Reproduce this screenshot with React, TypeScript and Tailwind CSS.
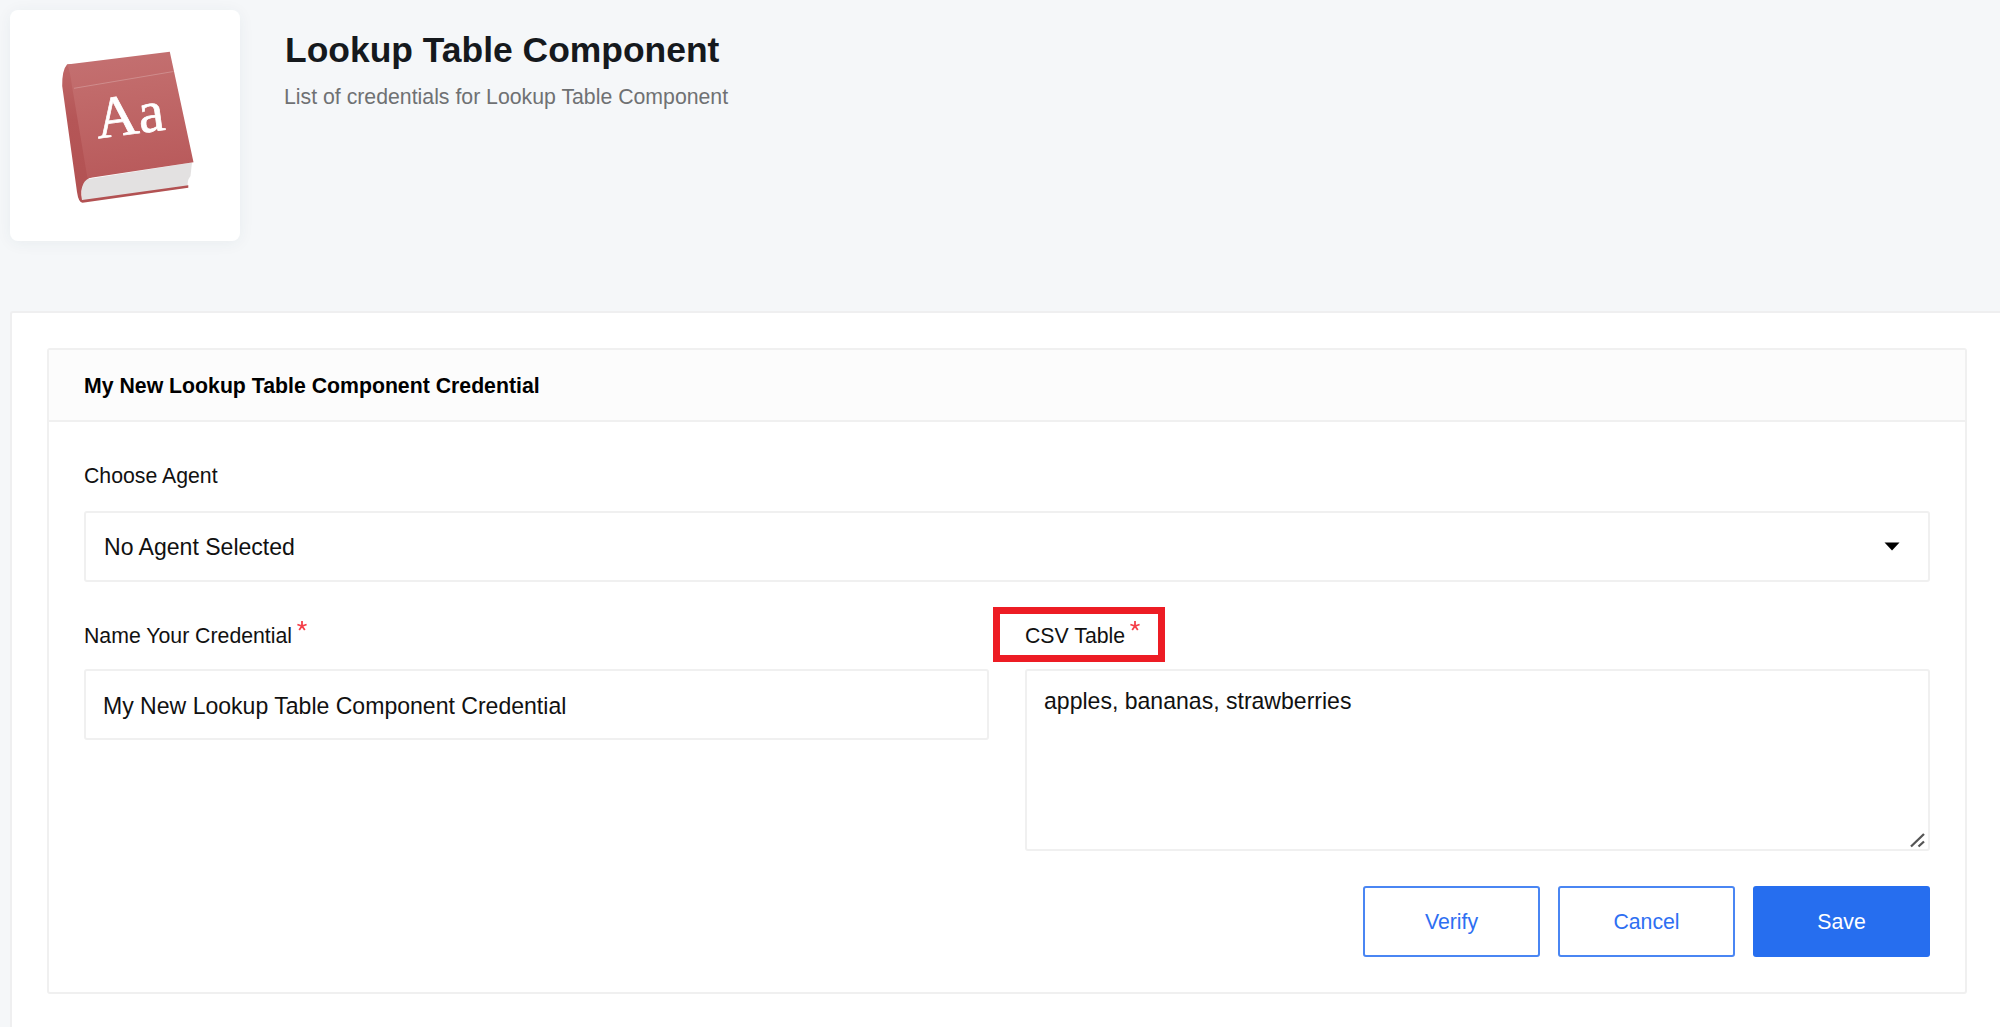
import type { ReactNode } from "react";

function BookLogo() {
  return (
    <svg viewBox="50 40 160 170" className="h-[170px] w-[160px]" aria-hidden="true">
      <defs>
        <linearGradient id="cover" x1="0" y1="0" x2="0.15" y2="1">
          <stop offset="0" stopColor="#c47172" />
          <stop offset="0.35" stopColor="#c16a6a" />
          <stop offset="1" stopColor="#b95b5c" />
        </linearGradient>
        <linearGradient id="spine" x1="0" y1="0" x2="0" y2="1">
          <stop offset="0" stopColor="#bf6767" />
          <stop offset="0.4" stopColor="#b55657" />
          <stop offset="1" stopColor="#b25152" />
        </linearGradient>
      </defs>
      <path d="M82 180 L192 162.500 L190.500 176 Q186.500 181 188 187.500 L82 201.500 Z" fill="#e3e1e1" />
      <path
        d="M67 64.500 Q62 70 62.200 86 L77 192 Q78.500 202.500 82.500 202.700 L188.300 187.800 L188.300 185.300 L82 200 Q80 190 83.500 183.500 Q85.500 179 92 177 L80 100 L72 64 Z"
        fill="url(#spine)"
      />
      <path d="M67 64.500 L169.800 51.800 L193.500 162.300 L87.500 178.300 L72 86 Q70 70 67 64.500 Z" fill="url(#cover)" />
      <path d="M74 88.300 L173.500 71.500" stroke="#cf8c8c" strokeWidth="1" fill="none" />
      <text
        x="98"
        y="138.500"
        transform="rotate(-7.500 98 138.500)"
        fontFamily="'Liberation Serif', serif"
        fontSize="59"
        fill="#fff"
        stroke="#fff"
        strokeWidth="0.700"
      >
        Aa
      </text>
    </svg>
  );
}

function Label({ children, required }: { children: ReactNode; required?: boolean }) {
  return (
    <div className="flex h-[30px] items-center pt-[2px] text-[21.27px] leading-[28px] text-[#111]">
      <span>{children}</span>
      {required && (
        <svg viewBox="0 0 10 10" className="mb-[20px] ml-[5px] h-[10px] w-[10px]" aria-label="required">
          <path d="M5 0V5M0.400 3.500L5 5L9.600 3.500M2.200 9L5 5L7.800 9" stroke="#f5404a" strokeWidth="1.800" fill="none" />
        </svg>
      )}
    </div>
  );
}

const box = "rounded-[3px] border-2 border-[#f0f0f0] bg-white text-[23.05px] text-[#111]";
const outline =
  "h-[71px] w-[177px] rounded-[3px] border-2 border-[#4a86f3] bg-white pt-[2px] text-[21.27px] text-[#2e6ff2]";

export default function App() {
  return (
    <div className="flex h-[1027px] w-[2000px] flex-col overflow-hidden bg-[#f5f7f9] font-['Liberation_Sans',Arial,sans-serif]">
      <header className="flex h-[311px] shrink-0 gap-[45px] pl-[10px] pt-[10px]">
        <div className="flex h-[231px] w-[230px] shrink-0 rounded-lg bg-white pl-[40px] pt-[30px] shadow-[0_2px_16px_rgba(40,60,80,0.06)]">
          <BookLogo />
        </div>
        <div className="pt-[18px]">
          <h1 className="h-[44px] text-[35.45px] leading-[44px] font-bold text-[#15191d]">
            Lookup Table Component
          </h1>
          <p className="mt-[9px] -ml-px text-[21.27px] leading-[32px] text-[#6f7173]">
            List of credentials for Lookup Table Component
          </p>
        </div>
      </header>

      <main className="ml-[10px] flex-1 rounded-tl-[3px] border-t-2 border-l-2 border-[#efeff0] bg-white pt-[35px] pl-[35px]">
        <section className="flex h-[646px] w-[1920px] flex-col rounded-[3px] border-2 border-[#f0f0f0] bg-white">
          <div className="flex h-[72px] shrink-0 items-center border-b-2 border-[#f0f0f0] bg-[#fcfcfc] pt-[4px] pl-[35px] text-[21.27px] font-bold text-black">
            My New Lookup Table Component Credential
          </div>
          <div className="flex flex-col px-[35px] pt-[38px]">
            <Label>Choose Agent</Label>
            <div className={`mt-[21px] flex h-[71px] items-center justify-between pr-[28px] pl-[18px] ${box}`}>
              <span className="pt-[2px]">No Agent Selected</span>
              <svg viewBox="0 0 16 9" className="h-[9px] w-[16px]" aria-hidden="true">
                <path d="M0.500 0.500H15.500L8 8.500Z" fill="#000" />
              </svg>
            </div>
            <div className="mt-[38px] grid grid-cols-2 gap-[36px]">
              <div>
                <Label required>Name Your Credential</Label>
                <div className={`mt-[19px] flex h-[71px] items-center pt-[4px] pl-[17px] ${box}`}>
                  My New Lookup Table Component Credential
                </div>
              </div>
              <div>
                <div className="relative">
                  <Label required>CSV Table</Label>
                  <div className="absolute -top-[13px] -left-[32px] h-[55px] w-[172px] border-[7px] border-[#ed1c24]" />
                </div>
                <div className={`relative mt-[19px] h-[182px] pt-[12px] pl-[17px] leading-[36px] ${box}`}>
                  apples, bananas, strawberries
                  <svg viewBox="0 0 16 16" className="absolute right-[3px] bottom-px h-4 w-4" aria-hidden="true">
                    <path d="M2 14.500L15 2M9.500 14.500L15 9.500" stroke="#555" strokeWidth="2.300" fill="none" />
                  </svg>
                </div>
              </div>
            </div>
            <div className="mt-[35px] flex justify-end gap-[18px]">
              <button className={outline}>Verify</button>
              <button className={outline}>Cancel</button>
              <button className="h-[71px] w-[177px] rounded-[3px] bg-[#266eef] pt-[2px] text-[21.27px] text-white">Save</button>
            </div>
          </div>
        </section>
      </main>
    </div>
  );
}
